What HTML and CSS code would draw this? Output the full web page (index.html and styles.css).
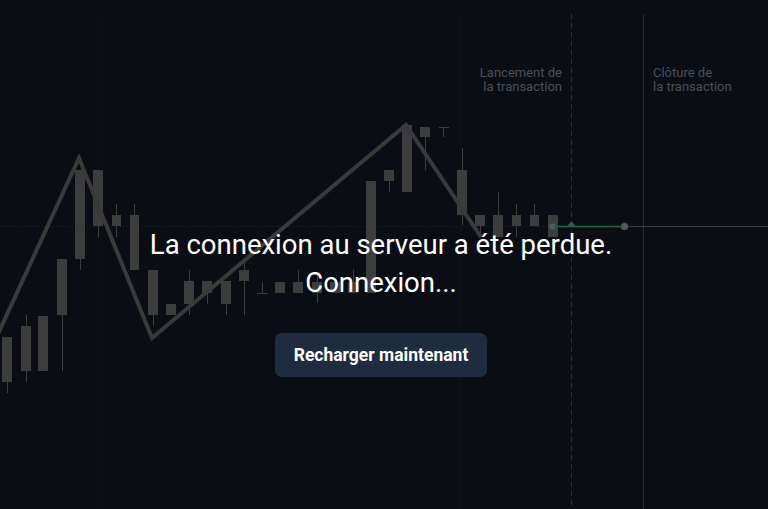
FILE: index.html
```html
<!DOCTYPE html>
<html lang="fr">
<head>
<meta charset="utf-8">
<title>Connexion perdue</title>
<link rel="stylesheet" href="styles.css">
</head>
<body>
<div class="stage">
  <svg class="chart" width="768" height="509" viewBox="0 0 768 509" xmlns="http://www.w3.org/2000/svg">
    <g class="grid">
      <line x1="98.5" y1="14" x2="98.5" y2="509"/>
      <line x1="460.5" y1="14" x2="460.5" y2="509"/>
    </g>
    <line class="level" x1="0" y1="226.5" x2="552" y2="226.5"/>
    <g class="wicks">
      <line x1="7.5" y1="337" x2="7.5" y2="393"/>
      <line x1="26.5" y1="315" x2="26.5" y2="382"/>
      <line x1="62.5" y1="259" x2="62.5" y2="371"/>
      <line x1="80.5" y1="170" x2="80.5" y2="270"/>
      <line x1="98.5" y1="170" x2="98.5" y2="237"/>
      <line x1="116.5" y1="204" x2="116.5" y2="237"/>
      <line x1="134.5" y1="204" x2="134.5" y2="215"/>
      <line x1="153.5" y1="270" x2="153.5" y2="326"/>
      <line x1="189.5" y1="270" x2="189.5" y2="315"/>
      <line x1="207.5" y1="281" x2="207.5" y2="304"/>
      <line x1="226.5" y1="281" x2="226.5" y2="315"/>
      <line x1="244.5" y1="260" x2="244.5" y2="315"/>
      <line x1="262.5" y1="282" x2="262.5" y2="293"/>
      <line x1="257" y1="293.5" x2="268" y2="293.5"/>
      <line x1="298.5" y1="270" x2="298.5" y2="282"/>
      <line x1="317.5" y1="273" x2="317.5" y2="303"/>
      <line x1="353.5" y1="270" x2="353.5" y2="282"/>
      <line x1="389.5" y1="170" x2="389.5" y2="192"/>
      <line x1="425.5" y1="127" x2="425.5" y2="170"/>
      <line x1="439" y1="127.5" x2="449" y2="127.5"/>
      <line x1="443.5" y1="127" x2="443.5" y2="137"/>
      <line x1="462.5" y1="148" x2="462.5" y2="225"/>
      <line x1="480.5" y1="215" x2="480.5" y2="237"/>
      <line x1="498.5" y1="192" x2="498.5" y2="237"/>
      <line x1="516.5" y1="204" x2="516.5" y2="237"/>
      <line x1="534.5" y1="204" x2="534.5" y2="226"/>
    </g>
    <g class="bodies">
      <rect x="2" y="337" width="10" height="45"/>
      <rect x="21" y="326" width="10" height="45"/>
      <rect x="38" y="316" width="10" height="55"/>
      <rect x="57" y="259" width="10" height="56"/>
      <rect x="75" y="170" width="10" height="89"/>
      <rect x="93" y="170" width="10" height="56"/>
      <rect x="112" y="215" width="9" height="11"/>
      <rect x="130" y="215" width="9" height="55"/>
      <rect x="148" y="270" width="10" height="45"/>
      <rect x="166" y="304" width="10" height="11"/>
      <rect x="184" y="281" width="10" height="23"/>
      <rect x="202" y="281" width="10" height="12"/>
      <rect x="221" y="281" width="10" height="23"/>
      <rect x="239" y="270" width="10" height="11"/>
      <rect x="275" y="282" width="10" height="11"/>
      <rect x="293" y="282" width="10" height="11"/>
      <rect x="312" y="282" width="10" height="11"/>
      <rect x="330" y="282" width="10" height="11"/>
      <rect x="348" y="282" width="10" height="11"/>
      <rect x="366" y="181" width="10" height="112"/>
      <rect x="384" y="170" width="10" height="11"/>
      <rect x="402" y="125" width="10" height="67"/>
      <rect x="420" y="127" width="10" height="10"/>
      <rect x="457" y="170" width="10" height="45"/>
      <rect x="475" y="215" width="10" height="11"/>
      <rect x="493" y="215" width="10" height="22"/>
      <rect x="512" y="215" width="9" height="11"/>
      <rect x="530" y="215" width="9" height="11"/>
      <rect x="548" y="215" width="10" height="22"/>
    </g>
    <polyline class="zigzag" points="-2,334 79,158 152,338 406,125 481,237"/>
    <line class="start-line" x1="571.5" y1="14" x2="571.5" y2="509"/>
    <line class="end-line" x1="643.5" y1="14" x2="643.5" y2="509"/>
    <line class="future" x1="624" y1="226.5" x2="768" y2="226.5"/>
    <line class="trade" x1="552" y1="226.5" x2="624" y2="226.5"/>
    <path class="marker" d="M571.5 221 L575.5 226 L567.5 226 Z"/>
    <circle class="dot" cx="552.5" cy="226.5" r="3.5"/>
    <circle class="dot" cx="624.5" cy="226.5" r="3.5"/>
  </svg>

  <div class="label label-start">Lancement de<br>la transaction</div>
  <div class="label label-end">Clôture de<br>la transaction</div>

  <main class="message">
    <p class="title">La connexion au serveur a été perdue.</p>
    <p class="title">Connexion...</p>
    <button class="reload" type="button">Recharger maintenant</button>
  </main>
</div>
</body>
</html>
```

FILE: styles.css
```css
* {
  box-sizing: border-box;
}

html, body {
  margin: 0;
  padding: 0;
  background: #0a0e14;
}

body {
  font-family: Roboto, "Noto Sans", "Liberation Sans", sans-serif;
  color: #ffffff;
}

.stage {
  position: relative;
  width: 768px;
  height: 509px;
  overflow: hidden;
  background: #0a0e14;
}

.chart {
  position: absolute;
  left: 0;
  top: 0;
}

.grid line {
  stroke: #0e1218;
  stroke-width: 1;
}

.level {
  stroke: #142a1d;
  stroke-width: 1;
  stroke-dasharray: 1 2;
}

.wicks line {
  stroke: #3d3d3d;
  stroke-width: 1;
}

.bodies rect {
  fill: #3d3d3d;
}

.zigzag {
  fill: none;
  stroke: #3a3a3a;
  stroke-width: 4;
  stroke-linejoin: miter;
  stroke-linecap: butt;
}

.start-line {
  stroke: #2a2e35;
  stroke-width: 1;
  stroke-dasharray: 5 4;
}

.end-line {
  stroke: #262a31;
  stroke-width: 1;
}

.future {
  stroke: #3a3d42;
  stroke-width: 1;
}

.trade {
  stroke: #1f6a3c;
  stroke-width: 1.5;
}

.marker {
  fill: #4b4e52;
}

.dot {
  fill: #55585c;
  stroke: #1f5a37;
  stroke-width: 1;
}

.label {
  position: absolute;
  top: 66px;
  font-size: 13px;
  line-height: 14px;
  color: #4a4f58;
}

.label-start {
  right: 206px;
  text-align: right;
}

.label-end {
  left: 653px;
  text-align: left;
}

.message {
  position: relative;
  display: flex;
  flex-direction: column;
  align-items: center;
  padding: 226px 6px 0 0;
}

.title {
  margin: 0;
  font-size: 27.5px;
  line-height: 38px;
  font-weight: 400;
  color: #ffffff;
  white-space: nowrap;
}

.reload {
  margin-top: 31px;
  width: 212px;
  height: 44px;
  border: 0;
  border-radius: 7px;
  background: #1f2c3f;
  color: #ffffff;
  font-family: Roboto, "Noto Sans", "Liberation Sans", sans-serif;
  font-size: 17.5px;
  font-weight: 700;
  padding: 0;
  cursor: pointer;
}
```
